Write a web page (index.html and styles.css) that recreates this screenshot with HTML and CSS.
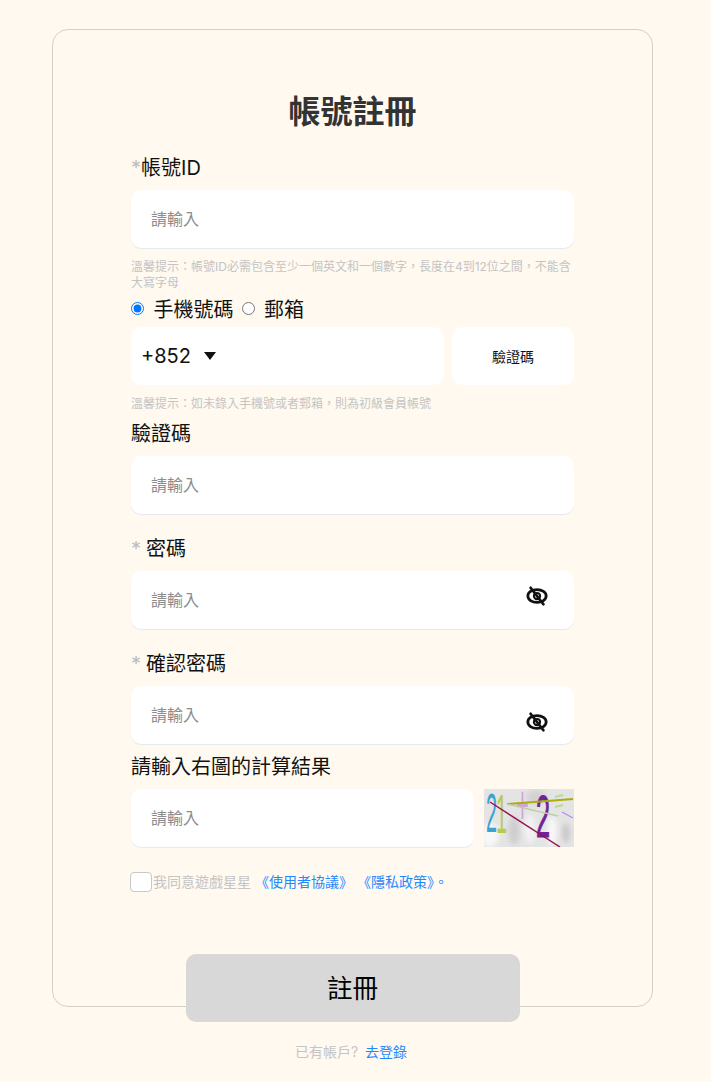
FILE: index.html
```html
<!DOCTYPE html>
<html lang="zh-Hant">
<head>
    <meta charset="UTF-8">
    <meta name="viewport" content="width=device-width, initial-scale=1.0">
    <title>帳號註冊</title>
    <link rel="stylesheet" href="styles.css">
</head>
<body>
    <div class="card">
        <h1 class="title">帳號註冊</h1>

        <!-- Account -->
        <label class="label label-first"><span class="star">*</span>帳號ID</label>
        <div class="field"><input class="field-input" placeholder="請輸入"></div>
        <p class="hint hint-account">溫馨提示：帳號ID必需包含至少一個英文和一個數字，長度在4到12位之間，不能含大寫字母</p>

        <!-- Phone or mail -->
        <div class="radio-row">
            <input class="radio" type="radio" name="contact" checked>
            <span class="radio-text">手機號碼</span>
            <input class="radio" type="radio" name="contact">
            <span class="radio-text">郵箱</span>
        </div>
        <div class="phone-row">
            <div class="phone-box">
                <span>+852</span>
                <span class="arrow"></span>
            </div>
            <button class="code-button">驗證碼</button>
        </div>
        <p class="hint hint-phone">溫馨提示：如未錄入手機號或者郵箱，則為初級會員帳號</p>

        <label class="label label-code">驗證碼</label>
        <div class="field field-code"><input class="field-input" placeholder="請輸入"></div>

        <!-- Passwords -->
        <label class="label label-gap"><span class="star star-space">*</span>密碼</label>
        <div class="field">
            <input class="field-input" placeholder="請輸入">
            <svg class="eye eye-up" viewBox="0 0 24 24" fill="none" stroke="#111" stroke-width="3" stroke-linecap="round">
                <ellipse cx="12" cy="12" rx="10" ry="7"/>
                <circle cx="12" cy="12" r="3.4" stroke-width="2.2"/>
                <path d="M5 3 19 21"/>
            </svg>
        </div>

        <label class="label label-gap"><span class="star star-space">*</span>確認密碼</label>
        <div class="field">
            <input class="field-input" placeholder="請輸入">
            <svg class="eye eye-down" viewBox="0 0 24 24" fill="none" stroke="#111" stroke-width="3" stroke-linecap="round">
                <ellipse cx="12" cy="12" rx="10" ry="7"/>
                <circle cx="12" cy="12" r="3.4" stroke-width="2.2"/>
                <path d="M5 3 19 21"/>
            </svg>
        </div>

        <!-- Captcha -->
        <label class="label label-captcha">請輸入右圖的計算結果</label>
        <div class="captcha-row">
            <div class="field field-captcha"><input class="field-input" placeholder="請輸入"></div>
            <svg class="captcha" viewBox="0 0 90 58">
                <defs>
                    <filter id="soft"><feGaussianBlur stdDeviation="2.5"/></filter>
                </defs>
                <rect width="90" height="58" fill="#e4e4e4"/>
                <g filter="url(#soft)">
                    <ellipse cx="6" cy="46" rx="9" ry="12" fill="#f8f8f8"/>
                    <ellipse cx="30" cy="42" rx="6" ry="14" fill="#cfcfcf"/>
                    <ellipse cx="46" cy="40" rx="6" ry="14" fill="#f2f2f2"/>
                    <ellipse cx="52" cy="8" rx="10" ry="7" fill="#d2d2d2"/>
                    <ellipse cx="68" cy="42" rx="5" ry="14" fill="#f8f8f8"/>
                    <ellipse cx="82" cy="44" rx="4" ry="10" fill="#c9c9c9"/>
                </g>
                <text class="captcha-digit" transform="translate(2 43) scale(.36 1)" fill="#3aa3d0">2</text>
                <text class="captcha-digit" transform="translate(12 44) scale(.36 1)" fill="#b8c94e">1</text>
                <text class="captcha-digit" transform="translate(32 35) scale(.4 1)" fill="#cfa3dc">+</text>
                <text class="captcha-digit" transform="translate(52 48) scale(.46 1.08)" fill="#6f2496" stroke="#6f2496" stroke-width="1">2</text>
                <path d="M71 8 79 6M71 18 79 16" stroke="#b5dd8a" stroke-width="2" fill="none"/>
                <path d="M23 15 89 10" stroke="#aeab0e" stroke-width="2" fill="none"/>
                <path d="M23 15 74 27" stroke="#bcd0a0" stroke-width="1.4" fill="none"/>
                <path d="M78 23 89 29" stroke="#b48cf0" stroke-width="1.4" fill="none"/>
                <path d="M6 13 76 58" stroke="#96104f" stroke-width="1.4" fill="none"/>
            </svg>
        </div>

        <!-- Agreement -->
        <div class="agree-row">
            <input class="agree-box" type="checkbox">
            <span class="agree-text">我同意遊戲星星</span>
            <a class="link agree-link">《使用者協議》</a>
            <a class="link agree-link">《隱私政策》。</a>
        </div>

        <button class="submit">註冊</button>
    </div>

    <div class="footer"><span class="footer-text">已有帳戶?</span> <a class="link footer-link">去登錄</a></div>
</body>
</html>
```

FILE: styles.css
```css
/* Page */
* {
    box-sizing: border-box;
}

body {
    margin: 0;
    padding: 29px 58px 0 52px;
    background-color: #fff9f0;
    font-family: Inter, "Noto Sans CJK TC", sans-serif;
    color: #111;
    overflow: hidden;
}

/* Card */
.card {
    display: flex;
    flex-direction: column;
    height: 978px;
    padding: 62px 78px 0;
    border: 1px solid #d2d0ca;
    border-radius: 16px;
}

.card > * {
    flex-shrink: 0;
}

.title {
    margin: 0;
    height: 40px;
    font-size: 32px;
    line-height: 40px;
    font-weight: 700;
    text-align: center;
    color: #333;
}

/* Labels */
.label {
    display: block;
    height: 28px;
    font-size: 20px;
    line-height: 28px;
}

.label-first {
    margin-top: 22px;
}

.label-code {
    margin-top: 8px;
}

.label-gap {
    margin-top: 21px;
}

.label-captcha {
    margin-top: 9px;
}

.star {
    color: #bdbdbd;
}

.star-space {
    margin-right: 5px;
}

/* Inputs */
.field {
    display: flex;
    align-items: center;
    height: 58px;
    margin-top: 8px;
    background-color: #fff;
    border-radius: 10px;
    box-shadow: 0 1px 1px #e6e8ee;
}

.field-input {
    flex: 1;
    min-width: 0;
    height: 100%;
    padding: 0 20px;
    border: none;
    outline: none;
    background: transparent;
    font-family: inherit;
    font-size: 16px;
}

.field-input::placeholder {
    color: #8c8c8c;
}

.eye {
    width: 22px;
    height: 22px;
    margin-right: 26px;
}

.eye-up {
    margin-top: -8px;
}

.eye-down {
    margin-top: 14px;
}

/* Hints */
.hint {
    margin: 0;
    font-size: 12px;
    line-height: 16px;
    color: #c4c4c4;
}

.hint-account {
    margin-top: 11px;
}

.hint-phone {
    margin-top: 11px;
}

/* Radios */
.radio-row {
    display: flex;
    align-items: center;
    height: 26px;
    margin-top: 4px;
    margin-bottom: 2px;
    font-size: 20px;
}

.radio {
    width: 13px;
    height: 13px;
    margin: 0 9.5px 0 0;
}

.radio-text {
    margin-right: 8px;
}

/* Phone */
.phone-row {
    display: flex;
    gap: 8px;
    height: 58px;
    margin-top: 4px;
}

.phone-box {
    display: flex;
    align-items: center;
    flex: 1;
    padding-left: 10px;
    background-color: #fff;
    border-radius: 10px;
    font-size: 20px;
}

.arrow {
    width: 0;
    height: 0;
    margin-left: 13px;
    border-left: 6px solid transparent;
    border-right: 6px solid transparent;
    border-top: 8px solid #111;
}

.code-button {
    width: 122px;
    border: none;
    border-radius: 10px;
    background-color: #fff;
    font-family: inherit;
    font-size: 14px;
    color: #111;
}

/* Captcha */
.captcha-row {
    display: flex;
    gap: 10px;
    margin-top: 8px;
}

.field-captcha {
    flex: 1;
    margin-top: 0;
}

.captcha {
    width: 90px;
    height: 58px;
}

.captcha-digit {
    font-family: "Liberation Sans", sans-serif;
    font-size: 55px;
}

/* Agreement */
.agree-row {
    display: flex;
    align-items: center;
    height: 20px;
    margin-top: 25px;
    margin-left: -1px;
    font-size: 14px;
}

.agree-box {
    appearance: none;
    width: 22px;
    height: 20px;
    margin: 0 1px 0 0;
    background-color: #fff;
    border: 1px solid #c8c8c8;
    border-radius: 4px;
}

.agree-text,
.agree-link {
    margin-top: -2px;
    margin-right: 4px;
}

.agree-text {
    color: #c4c4c4;
}

.link {
    color: #1e88ff;
}

/* Submit */
.submit {
    align-self: center;
    width: 334px;
    height: 68px;
    margin-top: 62px;
    padding-bottom: 5px;
    border: none;
    border-radius: 10px;
    background-color: #d8d8d8;
    font-family: inherit;
    font-size: 25.6px;
    color: #000;
}

/* Footer */
.footer {
    margin-top: 35px;
    padding-right: 3px;
    font-size: 14px;
    line-height: 20px;
    text-align: center;
}

.footer-text {
    color: #c4c4c4;
}

.footer-link {
    margin-left: 3px;
}
```
